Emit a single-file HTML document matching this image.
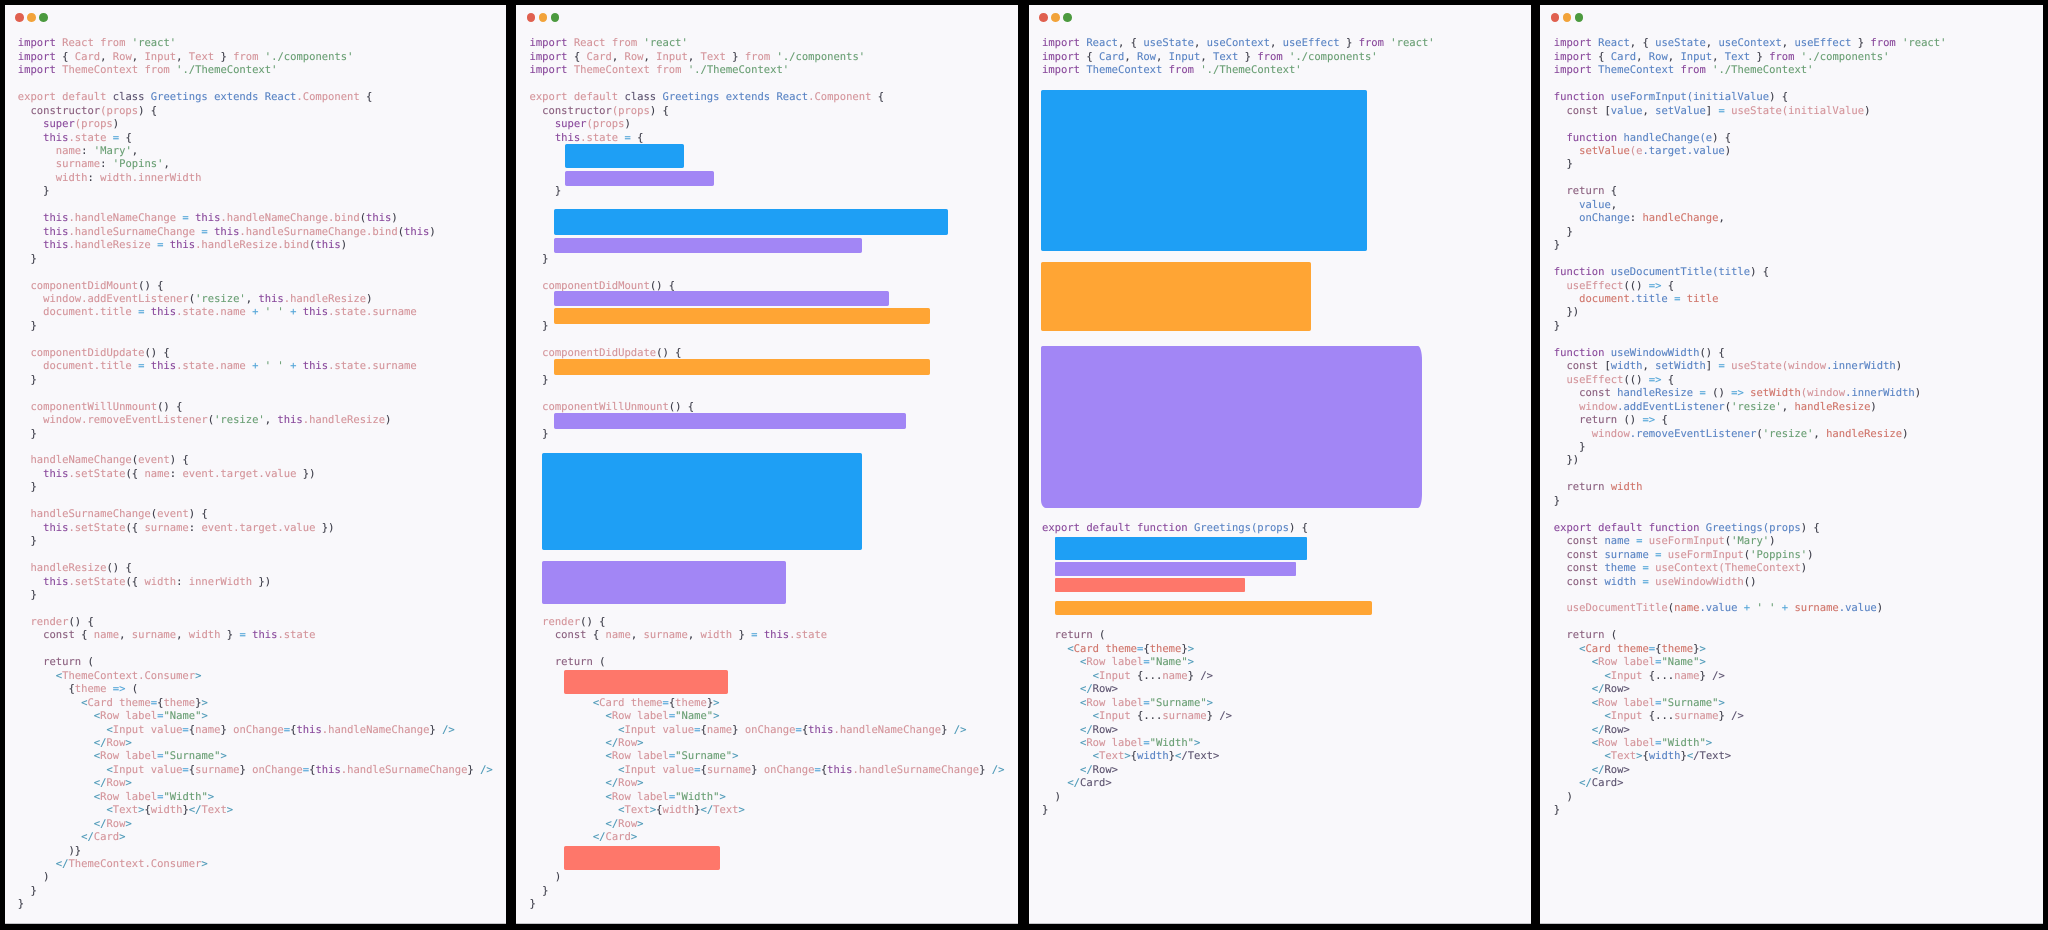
<!DOCTYPE html>
<html lang="en">
<head>
<meta charset="utf-8">
<title>Class to Hooks</title>
<style>
html,body{margin:0;padding:0;background:#000;width:2048px;height:930px;overflow:hidden}
.panel{position:absolute;top:5px;height:918px;background:#f9f8fb;border-bottom:1px solid #c4c4c8;box-sizing:content-box}
.dot{position:absolute;top:8px;width:8.5px;height:8.5px;border-radius:50%}
.d1{background:#e0604f}.d2{background:#f2a33a}.d3{background:#4c9a3f}
pre{position:absolute;top:37.4px;margin:0;font-family:"DejaVu Sans Mono","Liberation Mono",monospace;font-size:10.53px;line-height:13.45px;color:#3c3c48;text-rendering:geometricPrecision;-webkit-text-stroke:.12px;filter:blur(.3px);white-space:pre}
pre i{font-style:normal}
.k{color:#8a4a9c}.p{color:#d4959b}.s{color:#6a9f74}.b{color:#5a84c4}.o{color:#55a6d8}
.m{color:#5d5470}.c{color:#8a5f7e}.r{color:#d0766c}.t{color:#4f9ab8}
.x{position:absolute;border-radius:2px}
.bl{background:#1e9ff5}.pu{background:#a286f5}.or{background:#ffa534}.re{background:#fe776a}
</style>
</head>
<body>

<div class="panel" style="left:5px;width:501px">
<div class="dot d1" style="left:10px"></div><div class="dot d2" style="left:22px"></div><div class="dot d3" style="left:34px"></div>
</div>
<pre style="left:17.8px"><i class=k>import</i> <i class=p>React from</i> <i class=s>'react'</i>
<i class=k>import</i> { <i class=p>Card</i>, <i class=p>Row</i>, <i class=p>Input</i>, <i class=p>Text</i> } <i class=p>from</i> <i class=s>'./components'</i>
<i class=k>import</i> <i class=p>ThemeContext from</i> <i class=s>'./ThemeContext'</i>

<i class=p>export default</i> <i class=m>class</i> <i class=b>Greetings extends React</i><i class=p>.Component</i> {
  <i class=c>constructor</i><i class=p>(props</i>) {
    <i class=k>super</i><i class=p>(props</i>)
    <i class=k>this</i><i class=p>.state</i><i class=o> = </i>{
      <i class=p>name</i>: <i class=s>'Mary'</i>,
      <i class=p>surname</i>: <i class=s>'Popins'</i>,
      <i class=p>width</i>: <i class=p>width.innerWidth</i>
    }

    <i class=k>this</i><i class=p>.handleNameChange</i><i class=o> = </i><i class=k>this</i><i class=p>.handleNameChange.bind</i>(<i class=k>this</i>)
    <i class=k>this</i><i class=p>.handleSurnameChange</i><i class=o> = </i><i class=k>this</i><i class=p>.handleSurnameChange.bind</i>(<i class=k>this</i>)
    <i class=k>this</i><i class=p>.handleResize</i><i class=o> = </i><i class=k>this</i><i class=p>.handleResize.bind</i>(<i class=k>this</i>)
  }

  <i class=p>componentDidMount</i>() {
    <i class=p>window.addEventListener</i>(<i class=s>'resize'</i>, <i class=k>this</i><i class=p>.handleResize</i>)
    <i class=p>document.title</i><i class=o> = </i><i class=k>this</i><i class=p>.state.name</i><i class=o> + </i><i class=s>' '</i><i class=o> + </i><i class=k>this</i><i class=p>.state.surname</i>
  }

  <i class=p>componentDidUpdate</i>() {
    <i class=p>document.title</i><i class=o> = </i><i class=k>this</i><i class=p>.state.name</i><i class=o> + </i><i class=s>' '</i><i class=o> + </i><i class=k>this</i><i class=p>.state.surname</i>
  }

  <i class=p>componentWillUnmount</i>() {
    <i class=p>window.removeEventListener</i>(<i class=s>'resize'</i>, <i class=k>this</i><i class=p>.handleResize</i>)
  }

  <i class=p>handleNameChange</i>(<i class=p>event</i>) {
    <i class=k>this</i><i class=p>.setState</i>({ <i class=p>name</i>: <i class=p>event.target.value</i> })
  }

  <i class=p>handleSurnameChange</i>(<i class=p>event</i>) {
    <i class=k>this</i><i class=p>.setState</i>({ <i class=p>surname</i>: <i class=p>event.target.value</i> })
  }

  <i class=p>handleResize</i>() {
    <i class=k>this</i><i class=p>.setState</i>({ <i class=p>width</i>: <i class=p>innerWidth</i> })
  }

  <i class=p>render</i>() {
    <i class=c>const</i> { <i class=p>name</i>, <i class=p>surname</i>, <i class=p>width</i> }<i class=o> = </i><i class=k>this</i><i class=p>.state</i>

    <i class=c>return</i> (
      <i class=t>&lt;</i><i class=p>ThemeContext.Consumer</i><i class=t>&gt;</i>
        {<i class=p>theme</i> <i class=o>=&gt;</i> (
          <i class=t>&lt;</i><i class=p>Card theme</i><i class=o>=</i>{<i class=p>theme</i>}<i class=t>&gt;</i>
            <i class=t>&lt;</i><i class=p>Row label</i><i class=o>=</i><i class=s>"Name"</i><i class=t>&gt;</i>
              <i class=t>&lt;</i><i class=p>Input value</i><i class=o>=</i>{<i class=p>name</i>} <i class=p>onChange</i><i class=o>=</i>{<i class=k>this</i><i class=p>.handleNameChange</i>} <i class=t>/&gt;</i>
            <i class=t>&lt;/</i><i class=p>Row</i><i class=t>&gt;</i>
            <i class=t>&lt;</i><i class=p>Row label</i><i class=o>=</i><i class=s>"Surname"</i><i class=t>&gt;</i>
              <i class=t>&lt;</i><i class=p>Input value</i><i class=o>=</i>{<i class=p>surname</i>} <i class=p>onChange</i><i class=o>=</i>{<i class=k>this</i><i class=p>.handleSurnameChange</i>} <i class=t>/&gt;</i>
            <i class=t>&lt;/</i><i class=p>Row</i><i class=t>&gt;</i>
            <i class=t>&lt;</i><i class=p>Row label</i><i class=o>=</i><i class=s>"Width"</i><i class=t>&gt;</i>
              <i class=t>&lt;</i><i class=p>Text</i><i class=t>&gt;</i>{<i class=p>width</i>}<i class=t>&lt;/</i><i class=p>Text</i><i class=t>&gt;</i>
            <i class=t>&lt;/</i><i class=p>Row</i><i class=t>&gt;</i>
          <i class=t>&lt;/</i><i class=p>Card</i><i class=t>&gt;</i>
        )}
      <i class=t>&lt;/</i><i class=p>ThemeContext.Consumer</i><i class=t>&gt;</i>
    )
  }
}</pre>

<div class="panel" style="left:516.3px;width:502px">
<div class="dot d1" style="left:10.4px"></div><div class="dot d2" style="left:22.4px"></div><div class="dot d3" style="left:34.4px"></div>
</div>
<pre style="left:529.5px"><i class=k>import</i> <i class=p>React from</i> <i class=s>'react'</i>
<i class=k>import</i> { <i class=p>Card</i>, <i class=p>Row</i>, <i class=p>Input</i>, <i class=p>Text</i> } <i class=p>from</i> <i class=s>'./components'</i>
<i class=k>import</i> <i class=p>ThemeContext from</i> <i class=s>'./ThemeContext'</i>

<i class=p>export default</i> <i class=m>class</i> <i class=b>Greetings extends React</i><i class=p>.Component</i> {
  <i class=c>constructor</i><i class=p>(props</i>) {
    <i class=k>super</i><i class=p>(props</i>)
    <i class=k>this</i><i class=p>.state</i><i class=o> = </i>{



    }




  }

  <i class=p>componentDidMount</i>() {


  }

  <i class=p>componentDidUpdate</i>() {

  }

  <i class=p>componentWillUnmount</i>() {

  }













  <i class=p>render</i>() {
    <i class=c>const</i> { <i class=p>name</i>, <i class=p>surname</i>, <i class=p>width</i> }<i class=o> = </i><i class=k>this</i><i class=p>.state</i>

    <i class=c>return</i> (


          <i class=t>&lt;</i><i class=p>Card theme</i><i class=o>=</i>{<i class=p>theme</i>}<i class=t>&gt;</i>
            <i class=t>&lt;</i><i class=p>Row label</i><i class=o>=</i><i class=s>"Name"</i><i class=t>&gt;</i>
              <i class=t>&lt;</i><i class=p>Input value</i><i class=o>=</i>{<i class=p>name</i>} <i class=p>onChange</i><i class=o>=</i>{<i class=k>this</i><i class=p>.handleNameChange</i>} <i class=t>/&gt;</i>
            <i class=t>&lt;/</i><i class=p>Row</i><i class=t>&gt;</i>
            <i class=t>&lt;</i><i class=p>Row label</i><i class=o>=</i><i class=s>"Surname"</i><i class=t>&gt;</i>
              <i class=t>&lt;</i><i class=p>Input value</i><i class=o>=</i>{<i class=p>surname</i>} <i class=p>onChange</i><i class=o>=</i>{<i class=k>this</i><i class=p>.handleSurnameChange</i>} <i class=t>/&gt;</i>
            <i class=t>&lt;/</i><i class=p>Row</i><i class=t>&gt;</i>
            <i class=t>&lt;</i><i class=p>Row label</i><i class=o>=</i><i class=s>"Width"</i><i class=t>&gt;</i>
              <i class=t>&lt;</i><i class=p>Text</i><i class=t>&gt;</i>{<i class=p>width</i>}<i class=t>&lt;/</i><i class=p>Text</i><i class=t>&gt;</i>
            <i class=t>&lt;/</i><i class=p>Row</i><i class=t>&gt;</i>
          <i class=t>&lt;/</i><i class=p>Card</i><i class=t>&gt;</i>


    )
  }
}</pre>
<div class="x bl" style="left:565px;top:144.3px;width:118.7px;height:24px"></div>
<div class="x pu" style="left:565.3px;top:170.7px;width:148.4px;height:15.6px"></div>
<div class="x bl" style="left:554px;top:208.7px;width:393.7px;height:26.6px"></div>
<div class="x pu" style="left:554.3px;top:237.7px;width:308px;height:15.6px"></div>
<div class="x pu" style="left:554.3px;top:290.7px;width:334.7px;height:15.6px"></div>
<div class="x or" style="left:554px;top:308.3px;width:376px;height:16px"></div>
<div class="x or" style="left:554px;top:359.3px;width:376px;height:16px"></div>
<div class="x pu" style="left:554.3px;top:413.3px;width:351.7px;height:15.4px"></div>
<div class="x bl" style="left:542.3px;top:452.7px;width:320px;height:97px"></div>
<div class="x pu" style="left:542.3px;top:561.3px;width:244px;height:43px"></div>
<div class="x re" style="left:563.7px;top:670.3px;width:164.6px;height:23.7px"></div>
<div class="x re" style="left:564px;top:846px;width:155.7px;height:24px"></div>

<div class="panel" style="left:1028.7px;width:502px">
<div class="dot d1" style="left:10.6px"></div><div class="dot d2" style="left:22.6px"></div><div class="dot d3" style="left:34.6px"></div>
</div>
<pre style="left:1042px"><i class=k>import</i> <i class=b>React</i>, { <i class=b>useState</i>, <i class=b>useContext</i>, <i class=b>useEffect</i> } <i class=k>from</i> <i class=s>'react'</i>
<i class=k>import</i> { <i class=b>Card</i>, <i class=b>Row</i>, <i class=b>Input</i>, <i class=b>Text</i> } <i class=k>from</i> <i class=s>'./components'</i>
<i class=k>import</i> <i class=b>ThemeContext</i> <i class=k>from</i> <i class=s>'./ThemeContext'</i>

































<i class=k>export default function</i> <i class=b>Greetings(props</i>) {







  <i class=c>return</i> (
    <i class=t>&lt;</i><i class=r>Card</i> <i class=r>theme</i><i class=o>=</i>{<i class=r>theme</i>}<i class=t>&gt;</i>
      <i class=t>&lt;</i><i class=p>Row label</i><i class=o>=</i><i class=s>"Name"</i><i class=t>&gt;</i>
        <i class=t>&lt;</i><i class=p>Input</i> {...<i class=p>name</i>} <i class=m>/&gt;</i>
      <i class=t>&lt;/</i><i class=m>Row</i><i class=m>&gt;</i>
      <i class=t>&lt;</i><i class=p>Row label</i><i class=o>=</i><i class=s>"Surname"</i><i class=t>&gt;</i>
        <i class=t>&lt;</i><i class=p>Input</i> {...<i class=p>surname</i>} <i class=m>/&gt;</i>
      <i class=t>&lt;/</i><i class=m>Row</i><i class=m>&gt;</i>
      <i class=t>&lt;</i><i class=p>Row label</i><i class=o>=</i><i class=s>"Width"</i><i class=t>&gt;</i>
        <i class=t>&lt;</i><i class=p>Text</i><i class=t>&gt;</i>{<i class=b>width</i>}<i class=t>&lt;</i><i class=m>/Text&gt;</i>
      <i class=t>&lt;/</i><i class=m>Row</i><i class=m>&gt;</i>
    <i class=t>&lt;/</i><i class=m>Card&gt;</i>
  )
}</pre>
<div class="x bl" style="left:1041px;top:90.3px;width:326.3px;height:160.7px"></div>
<div class="x or" style="left:1041.3px;top:262.3px;width:269.4px;height:68.7px"></div>
<div class="x pu" style="left:1041.3px;top:346.3px;width:380.4px;height:162px;border-radius:2px 4px 4px 5px / 2px 14px 14px 8px"></div>
<div class="x bl" style="left:1054.7px;top:537.3px;width:252px;height:22.4px;border-radius:1px"></div>
<div class="x pu" style="left:1054.7px;top:561.7px;width:241px;height:14px;border-radius:1px"></div>
<div class="x re" style="left:1054.7px;top:577.7px;width:190px;height:14.3px;border-radius:1px"></div>
<div class="x or" style="left:1054.7px;top:600.7px;width:317px;height:14px"></div>

<div class="panel" style="left:1540.3px;width:502.4px">
<div class="dot d1" style="left:10.4px"></div><div class="dot d2" style="left:22.4px"></div><div class="dot d3" style="left:34.4px"></div>
</div>
<pre style="left:1553.8px"><i class=k>import</i> <i class=b>React</i>, { <i class=b>useState</i>, <i class=b>useContext</i>, <i class=b>useEffect</i> } <i class=k>from</i> <i class=s>'react'</i>
<i class=k>import</i> { <i class=b>Card</i>, <i class=b>Row</i>, <i class=b>Input</i>, <i class=b>Text</i> } <i class=k>from</i> <i class=s>'./components'</i>
<i class=k>import</i> <i class=b>ThemeContext</i> <i class=k>from</i> <i class=s>'./ThemeContext'</i>

<i class=k>function</i> <i class=b>useFormInput(initialValue</i>) {
  <i class=c>const</i> [<i class=b>value</i>, <i class=b>setValue</i>]<i class=o> = </i><i class=p>useState(initialValue</i>)

  <i class=k>function</i> <i class=b>handleChange(e</i>) {
    <i class=r>setValue</i><i class=p>(e</i><i class=b>.target.value</i>)
  }

  <i class=c>return</i> {
    <i class=b>value</i>,
    <i class=b>onChange</i>: <i class=r>handleChange</i>,
  }
}

<i class=k>function</i> <i class=b>useDocumentTitle(title</i>) {
  <i class=p>useEffect</i>(() <i class=o>=&gt;</i> {
    <i class=r>document</i><i class=b>.title</i><i class=o> = </i><i class=r>title</i>
  })
}

<i class=k>function</i> <i class=b>useWindowWidth</i>() {
  <i class=c>const</i> [<i class=b>width</i>, <i class=b>setWidth</i>]<i class=o> = </i><i class=p>useState(window</i><i class=b>.innerWidth</i>)
  <i class=p>useEffect</i>(() <i class=o>=&gt;</i> {
    <i class=c>const</i> <i class=b>handleResize</i><i class=o> = </i>() <i class=o>=&gt;</i> <i class=r>setWidth</i><i class=p>(window</i><i class=b>.innerWidth</i>)
    <i class=p>window</i><i class=b>.addEventListener</i>(<i class=s>'resize'</i>, <i class=r>handleResize</i>)
    <i class=c>return</i> () <i class=o>=&gt;</i> {
      <i class=p>window</i><i class=b>.removeEventListener</i>(<i class=s>'resize'</i>, <i class=r>handleResize</i>)
    }
  })

  <i class=c>return</i> <i class=r>width</i>
}

<i class=k>export default function</i> <i class=b>Greetings(props</i>) {
  <i class=c>const</i> <i class=b>name</i><i class=o> = </i><i class=p>useFormInput</i>(<i class=s>'Mary'</i>)
  <i class=c>const</i> <i class=b>surname</i><i class=o> = </i><i class=p>useFormInput</i>(<i class=s>'Poppins'</i>)
  <i class=c>const</i> <i class=b>theme</i><i class=o> = </i><i class=p>useContext(ThemeContext</i>)
  <i class=c>const</i> <i class=b>width</i><i class=o> = </i><i class=p>useWindowWidth</i>()

  <i class=p>useDocumentTitle</i>(<i class=r>name</i><i class=b>.value</i><i class=o> + </i><i class=s>' '</i><i class=o> + </i><i class=r>surname</i><i class=b>.value</i>)

  <i class=c>return</i> (
    <i class=t>&lt;</i><i class=r>Card</i> <i class=r>theme</i><i class=o>=</i>{<i class=r>theme</i>}<i class=t>&gt;</i>
      <i class=t>&lt;</i><i class=p>Row label</i><i class=o>=</i><i class=s>"Name"</i><i class=t>&gt;</i>
        <i class=t>&lt;</i><i class=p>Input</i> {...<i class=p>name</i>} <i class=m>/&gt;</i>
      <i class=t>&lt;/</i><i class=m>Row</i><i class=m>&gt;</i>
      <i class=t>&lt;</i><i class=p>Row label</i><i class=o>=</i><i class=s>"Surname"</i><i class=t>&gt;</i>
        <i class=t>&lt;</i><i class=p>Input</i> {...<i class=p>surname</i>} <i class=m>/&gt;</i>
      <i class=t>&lt;/</i><i class=m>Row</i><i class=m>&gt;</i>
      <i class=t>&lt;</i><i class=p>Row label</i><i class=o>=</i><i class=s>"Width"</i><i class=t>&gt;</i>
        <i class=t>&lt;</i><i class=p>Text</i><i class=t>&gt;</i>{<i class=b>width</i>}<i class=t>&lt;</i><i class=m>/Text&gt;</i>
      <i class=t>&lt;/</i><i class=m>Row</i><i class=m>&gt;</i>
    <i class=t>&lt;/</i><i class=m>Card&gt;</i>
  )
}</pre>

</body>
</html>
